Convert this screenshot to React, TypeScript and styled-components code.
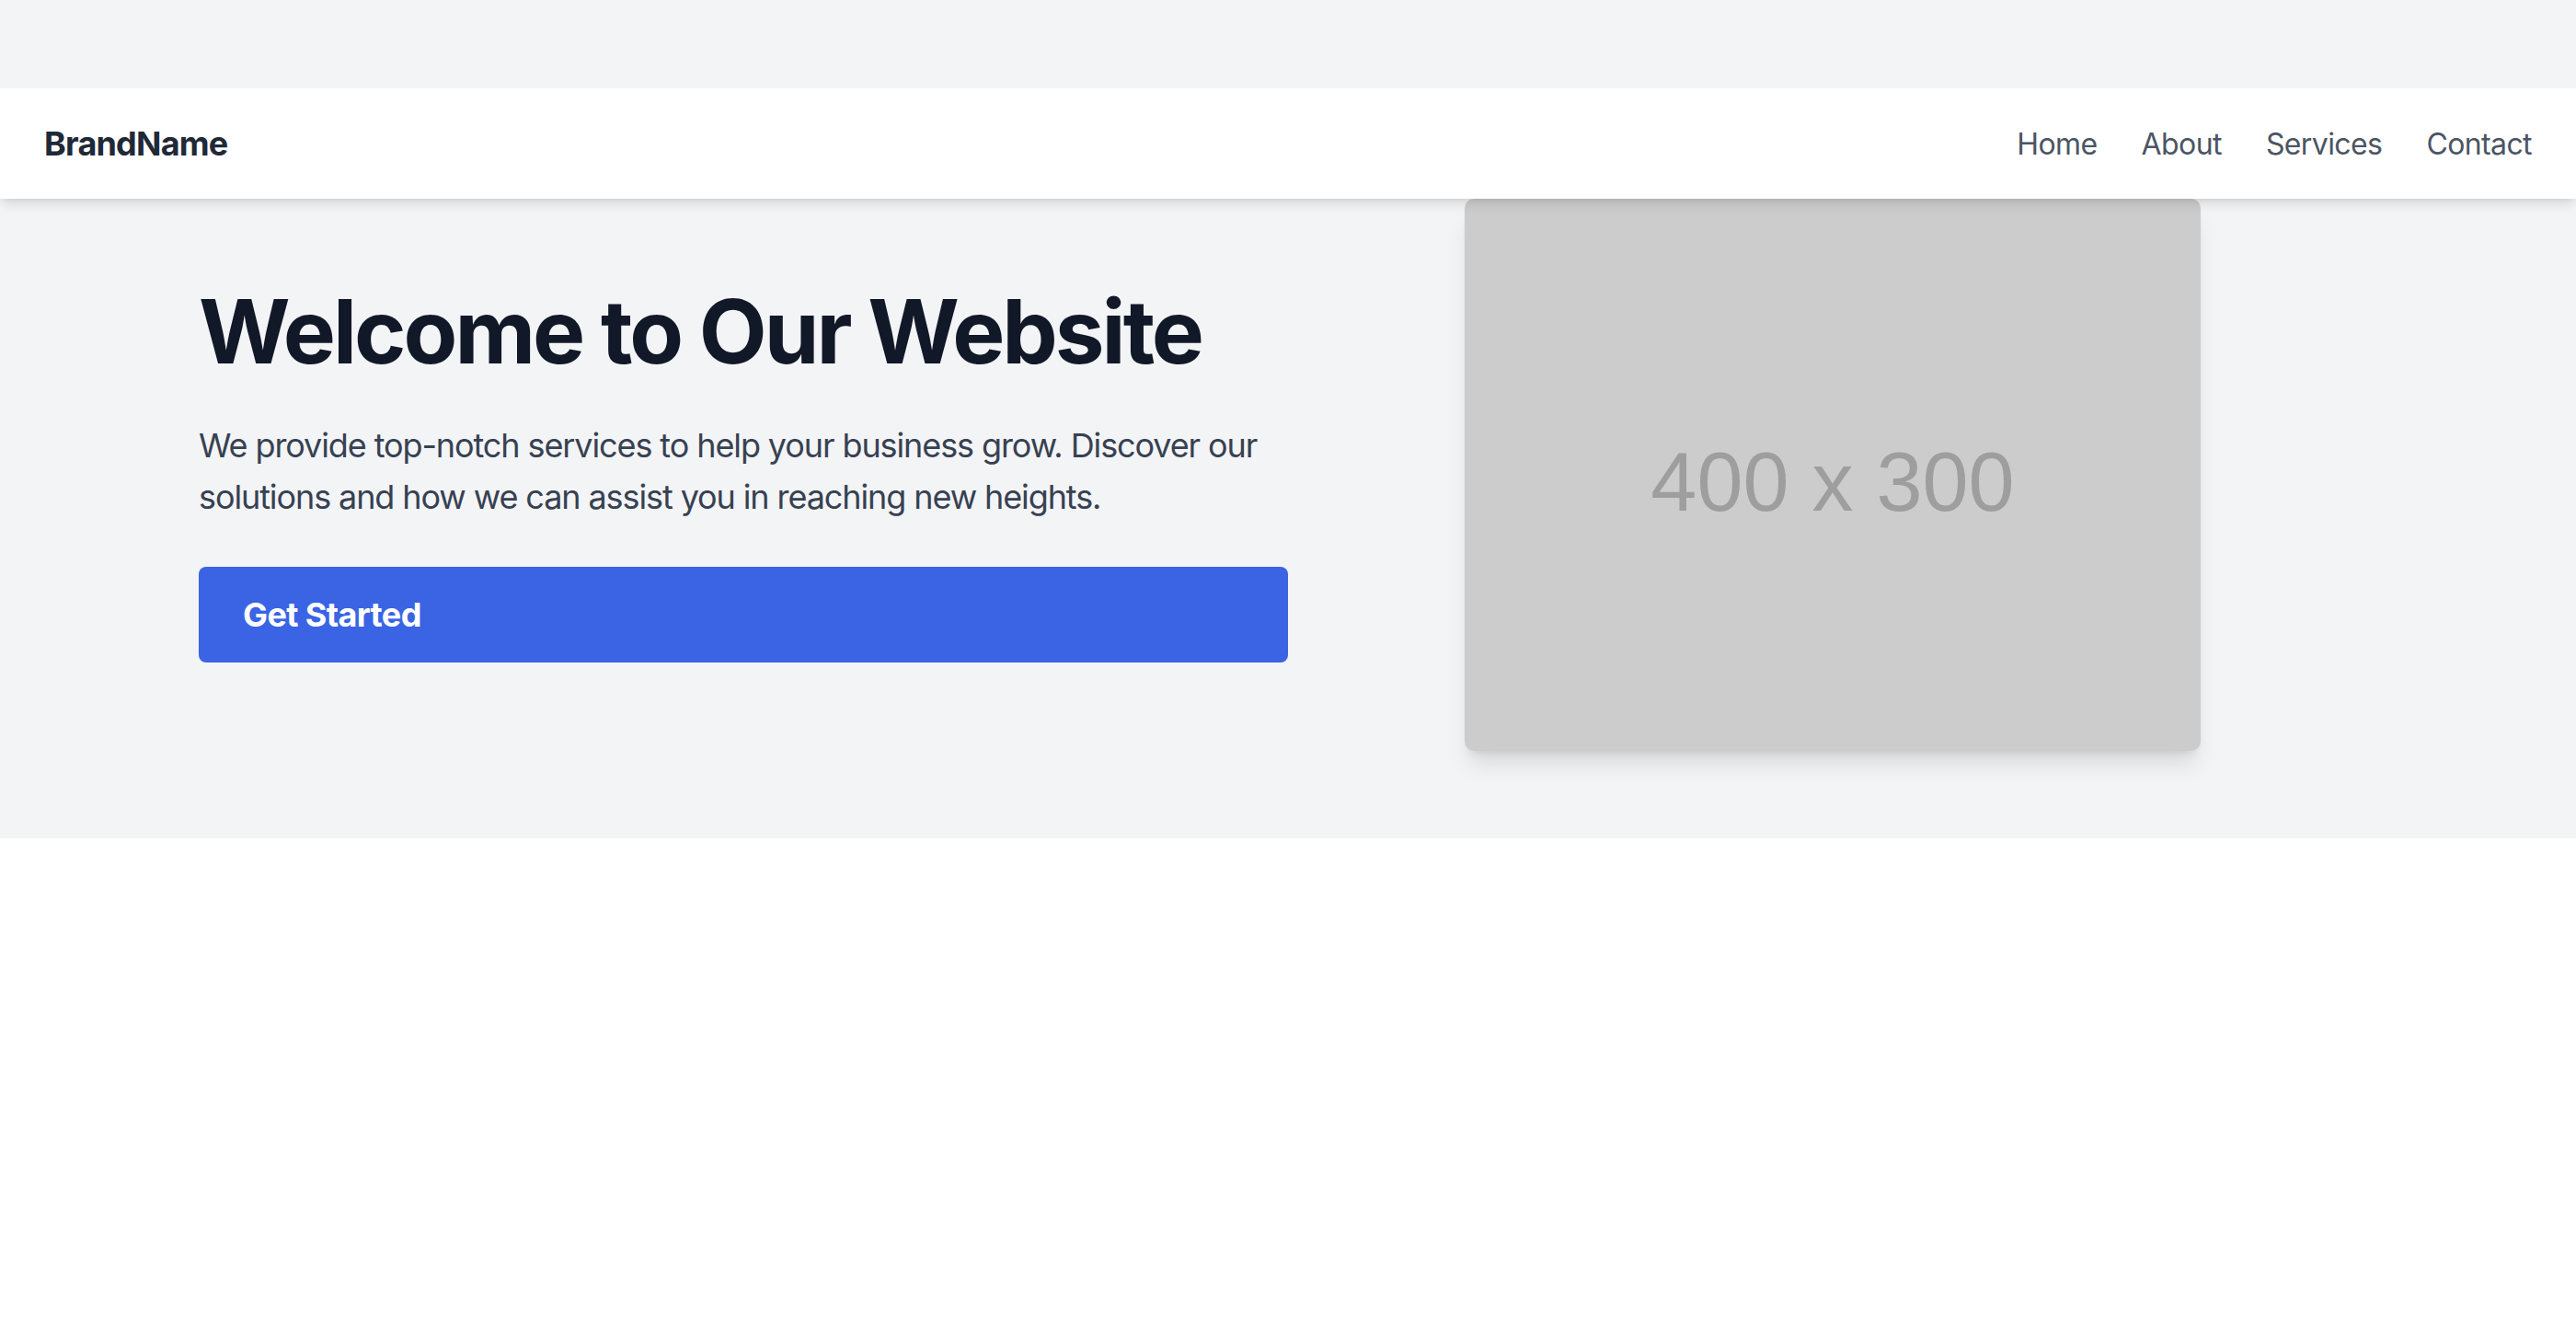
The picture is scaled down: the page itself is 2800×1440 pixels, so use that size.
import React from 'react';
import styled, { createGlobalStyle } from 'styled-components';

const GlobalStyle = createGlobalStyle`
  html, body {
    margin: 0;
    padding: 0;
    background: #ffffff;
    font-family: Inter, "Noto Sans", "Liberation Sans", sans-serif;
  }
  * {
    box-sizing: border-box;
  }
`;

const Page = styled.div`
  width: 100%;
`;

const Top = styled.div`
  background: #f3f4f6;
  padding-top: 96px;
`;

const Nav = styled.nav`
  position: relative;
  z-index: 10;
  height: 120px;
  background: #ffffff;
  display: flex;
  align-items: center;
  justify-content: space-between;
  padding: 0 48px;
  box-shadow: 0 8px 12px -2px rgba(0, 0, 0, 0.1), 0 4px 6px -4px rgba(0, 0, 0, 0.1);
`;

const Brand = styled.div`
  font-size: 36px;
  font-weight: 700;
  color: #1f2937;
  letter-spacing: -0.8px;
`;

const Links = styled.ul`
  display: flex;
  gap: 48px;
  list-style: none;
  margin: 0;
  padding: 0;
`;

const LinkItem = styled.a`
  font-size: 32px;
  color: #4b5563;
  text-decoration: none;
  letter-spacing: -0.6px;
`;

const Hero = styled.section`
  display: grid;
  grid-template-columns: 1fr 1fr;
  align-items: center;
  padding: 0 216px 95px;
`;

const Copy = styled.div`
  display: flex;
  flex-direction: column;
`;

const Title = styled.h1`
  margin: 0 0 48px 0;
  font-size: 96px;
  line-height: 1;
  font-weight: 700;
  color: #111827;
  letter-spacing: -3px;
`;

const Lead = styled.p`
  margin: 0 0 48px 0;
  font-size: 36px;
  line-height: 56px;
  color: #374151;
  letter-spacing: -1.1px;
`;

const CtaButton = styled.button`
  height: 104px;
  border: none;
  border-radius: 8px;
  background: #3a64e4;
  color: #ffffff;
  font-family: inherit;
  font-size: 36px;
  font-weight: 700;
  letter-spacing: -0.6px;
  text-align: left;
  padding: 0 48px;
  cursor: pointer;
`;

const Media = styled.div`
  display: flex;
  justify-content: center;
`;

const Placeholder = styled.div`
  width: 800px;
  height: 600px;
  background: #cccccc;
  border-radius: 10px;
  box-shadow: 0 20px 25px -5px rgba(0, 0, 0, 0.1), 0 8px 10px -6px rgba(0, 0, 0, 0.1);
  display: flex;
  align-items: center;
  justify-content: center;
  padding-top: 16px;
  font-family: "Liberation Sans", Arial, sans-serif;
  font-size: 90px;
  color: #9e9e9e;
`;

const navLinks = ['Home', 'About', 'Services', 'Contact'];

const App: React.FC = () => (
  <Page>
    <GlobalStyle />
    <Top>
      <Nav>
        <Brand>BrandName</Brand>
        <Links>
          {navLinks.map((l) => (
            <li key={l}>
              <LinkItem href="#">{l}</LinkItem>
            </li>
          ))}
        </Links>
      </Nav>
      <Hero>
        <Copy>
          <Title>Welcome to Our Website</Title>
          <Lead>
            We provide top-notch services to help your business grow. Discover our
            solutions and how we can assist you in reaching new heights.
          </Lead>
          <CtaButton>Get Started</CtaButton>
        </Copy>
        <Media>
          <Placeholder>400 x 300</Placeholder>
        </Media>
      </Hero>
    </Top>
  </Page>
);

export default App;
